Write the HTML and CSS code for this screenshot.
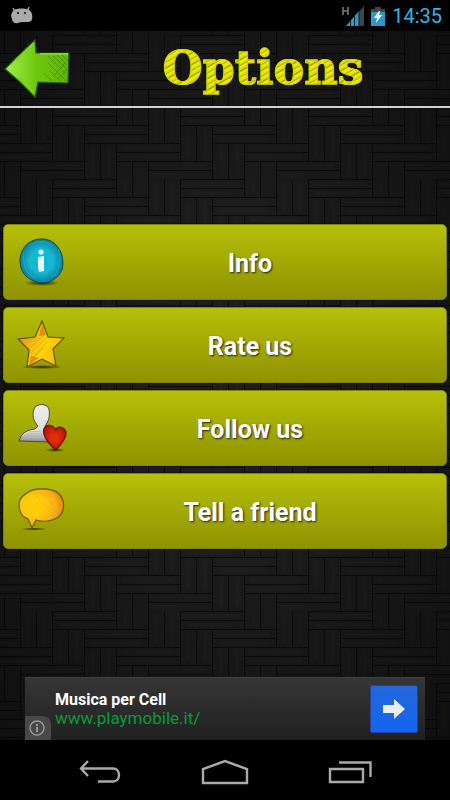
FILE: index.html
```html
<!DOCTYPE html>
<html lang="en">
<head>
  <meta charset="utf-8">
  <title>Options</title>
  <meta name="viewport" content="width=device-width, initial-scale=1.0">
  <link rel="stylesheet" href="styles.css">
</head>
<body>
  <div class="statusbar">
    <svg class="droid" width="22" height="18" viewBox="0 0 22 18" aria-hidden="true">
      <path d="M2 1l2 4M18 0l-2 5" stroke="#aaa" stroke-width="1.4"/>
      <path d="M3 3C6 1 15 1 18 3C22 5 22 12 20 14C17 16 10 14 7 16C4 17 1 15 1 12C-1 8 1 5 3 3Z" fill="#aaa"/>
      <circle cx="7" cy="6" r="1" fill="#000"/><circle cx="14" cy="6" r="1" fill="#000"/>
    </svg>
    <div class="status-icons">
      <svg width="22" height="20" viewBox="0 0 22 20" aria-hidden="true">
        <path d="M1 1v8M6 1v8M1 5h5" fill="none" stroke="#777" stroke-width="1.6"/>
        <path d="M4 20L22 0V20Z" fill="#444"/>
        <path d="M4 20L17 5V20Z" fill="#2c9ac4"/>
        <path d="M8.500 14v6M12.500 9v11M17 4v16" stroke="#05202b"/>
      </svg>
      <svg width="14" height="20" viewBox="0 0 14 20" aria-hidden="true">
        <path d="M4 1h6v2h4v4H0V3h4Z" fill="#444"/>
        <path d="M0 6h14v14H0Z" fill="#2c9ac4"/>
        <path d="M8 5L3 12h3l-1 5 6-8H8l1-4Z" fill="#fff"/>
      </svg>
      <span class="clock">14:35</span>
    </div>
  </div>

  <div class="app">
    <header class="header">
      <button class="back" type="button" aria-label="Back">
        <svg width="68" height="62" viewBox="0 0 68 62" aria-hidden="true">
          <defs>
            <linearGradient id="green" x1="0" y1="0" x2="1" y2="0">
              <stop offset="0" stop-color="#a0f24c"/>
              <stop offset=".5" stop-color="#6dc60b"/>
              <stop offset="1" stop-color="#64b30b"/>
            </linearGradient>
          </defs>
          <path d="M1 31L12 20L31 2L32 15L65 15L64 45L34 44L31 59L16 44Z" fill="url(#green)" stroke="#295b06" stroke-width="1.2"/>
          <path d="M12 22L30 5M15 40L29 54M36 16h28" stroke="#77d923" stroke-width="2"/>
          <path d="M44 18l18 18M49 18l14 13M53 17l10 10M58 17l6 6M44 25l18 18M46 33l10 10M40 35l8 8M63 31l-9 10M61 25l-12 14" stroke="#3f7d08" stroke-width=".6"/>
        </svg>
      </button>
      <h1>Options</h1>
    </header>

    <main class="menu">
      <button class="item" type="button">
        <svg class="icon" width="50" height="50" viewBox="0 0 50 50" aria-hidden="true">
          <defs>
            <radialGradient id="blue">
              <stop offset=".55" stop-color="#14b8d3"/>
              <stop offset="1" stop-color="#087f9a"/>
            </radialGradient>
            <radialGradient id="shade">
              <stop offset="0" stop-color="#222600"/>
              <stop offset="1" stop-color="#222600" stop-opacity="0"/>
            </radialGradient>
          </defs>
          <ellipse cx="25" cy="46" rx="18" ry="3" fill="url(#shade)"/>
          <path d="M15 4C21 1 31 1 37 6C43 11 46 18 46 27C46 36 39 42 32 45C25 47 16 45 10 40C5 36 3 30 3 23C3 15 8 7 15 4Z" fill="url(#blue)" stroke="#174c50"/>
          <path d="M7 16C5 27 9 37 18 41M41 12c4 10 2 22-6 28M14 8c7-5 17-4 22 1" fill="none" stroke="#2db3c9" stroke-width=".7"/>
          <path d="M21 20l6-1v15l-5 1-1-4Z" fill="#e5faff"/>
          <circle cx="24" cy="15" r="2.600" fill="#e5faff"/>
        </svg>
        <span class="label">Info</span>
      </button>
      <button class="item" type="button">
        <svg class="icon" width="50" height="50" viewBox="0 0 50 50" aria-hidden="true">
          <defs>
            <linearGradient id="gold" x1="0" y1="0" x2="1" y2=".4">
              <stop offset="0" stop-color="#d97907"/>
              <stop offset=".4" stop-color="#efb816"/>
              <stop offset=".65" stop-color="#fdd406"/>
              <stop offset="1" stop-color="#f7bc0b"/>
            </linearGradient>
          </defs>
          <ellipse cx="25" cy="47" rx="21" ry="2" fill="url(#shade)"/>
          <path d="M25 1L31 17L47 18L36 29L39 46L25 39L10 47L12 30L1 19L18 17Z" fill="url(#gold)" stroke="#5e4d08" stroke-width="1.1"/>
          <path d="M5 20l11-1M10 23l12-5M14 27l14-13M14 33L30 17M15 38L30 22M13 42L27 27" stroke="#e1a41c" stroke-width=".8"/>
          <path d="M25 4l-3 12 7-1ZM12 45l2-9 8 2Z" fill="#d87a0c" opacity=".7"/>
        </svg>
        <span class="label">Rate us</span>
      </button>
      <button class="item" type="button">
        <svg class="icon" width="50" height="50" viewBox="0 0 50 50" aria-hidden="true">
          <defs>
            <linearGradient id="grey" x1="0" y1="0" x2="0" y2="1">
              <stop offset="0" stop-color="#eee"/>
              <stop offset=".75" stop-color="#ddd"/>
              <stop offset="1" stop-color="#888"/>
            </linearGradient>
            <radialGradient id="red">
              <stop offset=".3" stop-color="#e32c08"/>
              <stop offset="1" stop-color="#b71609"/>
            </radialGradient>
          </defs>
          <ellipse cx="38" cy="47" rx="10" ry="2" fill="url(#shade)"/>
          <path d="M2 38C4 30 10 27 18 26L21 23C16 18 15 12 17 6C19 0 30 0 32 6C33 13 32 18 28 23L30 26L35 29V39Z" fill="url(#grey)" stroke="#4b4b3c"/>
          <path d="M5 36l24-1M7 33l20-1M9 31l17-1M12 29l13-1" stroke="#aaa" stroke-width=".7"/>
          <path d="M39 27C41 22 49 24 49 31C48 38 43 42 39 47C34 43 29 38 27 31C24 22 35 19 39 27Z" fill="url(#red)" stroke="#641009" stroke-width="1.2"/>
        </svg>
        <span class="label">Follow us</span>
      </button>
      <button class="item" type="button">
        <svg class="icon" width="50" height="50" viewBox="0 0 50 50" aria-hidden="true">
          <defs>
            <radialGradient id="bubble" cx=".35" cy=".45" r=".7">
              <stop offset=".35" stop-color="#fdcc0b"/>
              <stop offset=".7" stop-color="#f6ad16"/>
              <stop offset="1" stop-color="#d97807"/>
            </radialGradient>
          </defs>
          <ellipse cx="17" cy="43" rx="13" ry="1.500" fill="url(#shade)"/>
          <path d="M10 7C17 1 35 2 41 7C47 12 48 20 45 27C41 34 29 37 19 34L15 42L11 33C5 31 2 26 2 18C2 14 5 10 10 7Z" fill="url(#bubble)" stroke="#68550a" stroke-width="1.100"/>
          <path d="M22 32L44 16M27 33L45 21M33 32l11-8M23 28l17-14M17 7l16 18M24 6l13 14" stroke="#f2ad18" stroke-width=".6"/>
        </svg>
        <span class="label">Tell a friend</span>
      </button>
    </main>

    <aside class="ad">
      <span class="ad-info">
        <svg width="16" height="16" viewBox="0 0 16 16" fill="none" stroke="#999" aria-hidden="true">
          <circle cx="8" cy="8" r="7" stroke-width="1.400"/>
          <path d="M8 7v5M8 4v2" stroke-width="2"/>
        </svg>
      </span>
      <div class="ad-text">
        <strong>Musica per Cell</strong>
        <a href="#">www.playmobile.it/</a>
      </div>
      <button class="ad-go" type="button" aria-label="Open">
        <svg width="24" height="20" viewBox="0 0 24 20" aria-hidden="true">
          <path d="M1 6h11V0l11 10-11 10v-6H1Z" fill="#eee"/>
        </svg>
      </button>
    </aside>
  </div>

  <nav class="navbar">
    <button type="button" aria-label="Back">
      <svg width="44" height="24" viewBox="0 0 44 24" fill="none" stroke="#aaa" stroke-width="2.400" aria-hidden="true">
        <path d="M10 1L3 8.500L10 16M3 8.500H35C43 8.500 43 21.500 35 21.500H20"/>
      </svg>
    </button>
    <button type="button" aria-label="Home">
      <svg width="48" height="26" viewBox="0 0 48 26" fill="none" stroke="#aaa" stroke-width="2.400" aria-hidden="true">
        <path d="M2 24V10L24 2L46 10V24Z"/>
      </svg>
    </button>
    <button type="button" aria-label="Recent apps">
      <svg width="44" height="24" viewBox="0 0 44 24" fill="none" stroke="#aaa" stroke-width="2.400" aria-hidden="true">
        <path d="M2 9H35V22H2ZM11 2.500H42.500V17"/>
      </svg>
    </button>
  </nav>
</body>
</html>
```
FILE: styles.css
```css
body {
  margin: 0;
  min-height: 100vh;
  display: flex;
  flex-direction: column;
  background: #000;
  color: #fff;
  font-family: Roboto, Arial, sans-serif;
}
button {
  border: none;
  padding: 0;
  background: none;
  color: inherit;
  font-family: inherit;
  cursor: pointer;
}
svg {
  display: block;
}

/* android status bar */
.statusbar {
  height: 31px;
  padding: 0 8px 0 11px;
  display: flex;
  align-items: center;
  justify-content: space-between;
}
.status-icons {
  display: flex;
  align-items: center;
  gap: 7px;
}
.clock {
  color: #33b5e5;
  font-size: 20px;
  line-height: 24px;
}

/* wood weave, lighter towards the middle */
.app {
  flex: 1;
  display: flex;
  flex-direction: column;
  background:
    radial-gradient(ellipse at center, rgba(0,0,0,0) 20%, rgba(0,0,0,0.5) 100%),
    url("data:image/svg+xml,%3Csvg xmlns='http://www.w3.org/2000/svg' width='128' height='72'%3E%3Crect width='128' height='72' fill='%231e1e1e'/%3E%3Cg fill='none' stroke='%230e0e0e'%3E%3Cpath d='M.5.5h64v18H.5zM.5 9.500h64M32.500 18.500h64v18h-64zM32.500 27.500h64M64.500 36.500h64v18h-64zM64.500 45.500h64M96.500 54.500h64v18h-64zM96.500 63.500h64M-31.500 54.500h64v18h-64zM-31.500 63.500h64'/%3E%3Cpath d='M96.500.5v36M112.500.5v36M.5 18.500v36M16.500 18.500v36M32.500 36.500v36M48.500 36.500v36M64.500 54.500v18M80.500 54.500v18M64.500 0v18M80.500 0v18'/%3E%3C/g%3E%3Cpath d='M3 5h55M8 14h42M36 23h54M40 32h48M70 41h50M68 50h54M4 59h22M101 68h22M8 22v28M25 22v28M41 40v28M57 40v28M104 4v28M120 4v28M73 3v12' stroke='%23242424' stroke-width='3' opacity='.4'/%3E%3C/svg%3E") 52px 4px;
}
.header {
  height: 75px;
  display: flex;
  align-items: center;
  border-bottom: 2px solid #d5d0d5;
}
.back {
  margin-left: 4px;
}
h1 {
  flex: 1;
  margin: 0;
  padding-left: 4px;
  text-align: center;
  font-family: "DejaVu Serif", serif;
  font-size: 46px;
  line-height: 75px;
  color: transparent;
  background: repeating-linear-gradient(150deg, #f0f000 0, #e3e300 3px, #aaa900 4px, #f0f000 5px, #dada00 8px, #8d8b00 9px, #eded00 10px);
  -webkit-background-clip: text;
  background-clip: text;
  -webkit-text-stroke: 1px #d6d600;
}

.menu {
  flex: 1;
  display: flex;
  flex-direction: column;
  justify-content: center;
  gap: 7px;
  padding: 0 3px 13px;
}
.item {
  display: flex;
  align-items: center;
  min-height: 76px;
  padding-left: 13px;
  border: 1px solid #80850a;
  border-radius: 5px;
  background: linear-gradient(#b5c008, #8f9300);
  box-shadow: 0 0 2px #000;
}
.icon {
  flex: none;
}
.label {
  flex: 1;
  padding: 4px 13px 0 0;
  font-size: 25px;
  font-weight: bold;
  line-height: 32px;
  text-shadow: 1px 1px 2px #222;
}

.ad {
  position: relative;
  display: flex;
  align-items: center;
  justify-content: space-between;
  margin: 0 25px;
  padding: 0 7px 0 30px;
  height: 63px;
  box-sizing: border-box;
  background: linear-gradient(#363636, #202020);
  border-top: 1px solid #404040;
}
.ad-info {
  position: absolute;
  left: 0;
  bottom: 0;
  padding: 4px 6px 4px 4px;
  background: #484848;
  border-top-right-radius: 8px;
}
.ad-text {
  display: flex;
  flex-direction: column;
  font-size: 16px;
  line-height: 19px;
}
.ad-text a {
  color: #0c9a3a;
  font-size: 17px;
  text-decoration: none;
}
.ad-go {
  width: 48px;
  height: 48px;
  display: flex;
  align-items: center;
  justify-content: center;
  background: linear-gradient(#2466dc, #1266f0);
  border: 1px solid #2b3f9c;
  border-radius: 2px;
}

.navbar {
  height: 60px;
  padding: 4px 37px 0;
  box-sizing: border-box;
  display: flex;
  align-items: center;
}
.navbar button {
  flex: 1;
  display: flex;
  justify-content: center;
}
```
